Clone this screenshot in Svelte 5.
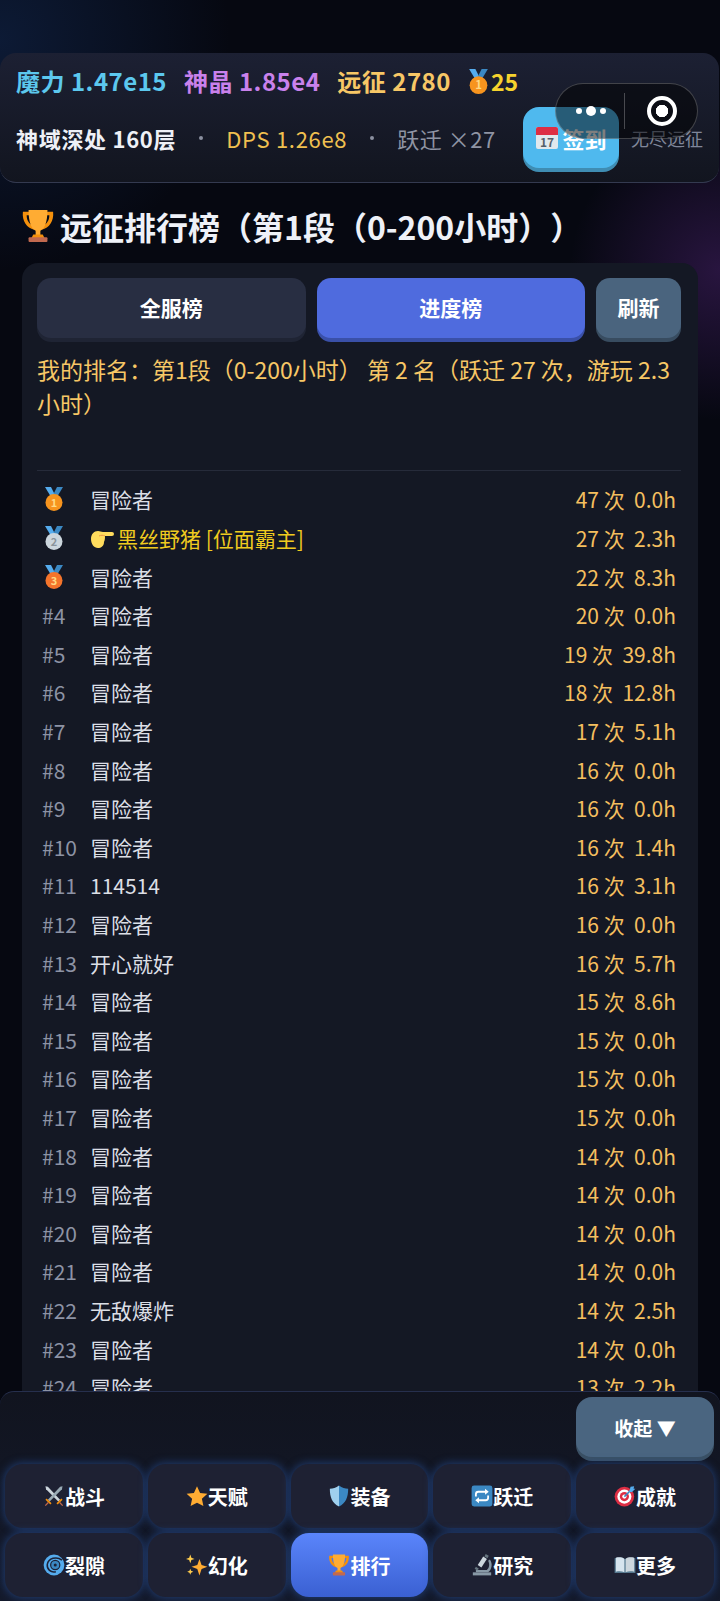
<script lang="ts">
	const rows = [
		['冒险者', '47 次', '0.0h'], ['黑丝野猪 [位面霸主]', '27 次', '2.3h'], ['冒险者', '22 次', '8.3h'],
		['冒险者', '20 次', '0.0h'], ['冒险者', '19 次', '39.8h'], ['冒险者', '18 次', '12.8h'],
		['冒险者', '17 次', '5.1h'], ['冒险者', '16 次', '0.0h'], ['冒险者', '16 次', '0.0h'],
		['冒险者', '16 次', '1.4h'], ['114514', '16 次', '3.1h'], ['冒险者', '16 次', '0.0h'],
		['开心就好', '16 次', '5.7h'], ['冒险者', '15 次', '8.6h'], ['冒险者', '15 次', '0.0h'],
		['冒险者', '15 次', '0.0h'], ['冒险者', '15 次', '0.0h'], ['冒险者', '14 次', '0.0h'],
		['冒险者', '14 次', '0.0h'], ['冒险者', '14 次', '0.0h'], ['冒险者', '14 次', '0.0h'],
		['无敌爆炸', '14 次', '2.5h'], ['冒险者', '14 次', '0.0h'], ['冒险者', '13 次', '2.2h']
	];

	const navItems = [
		{ id: 'swords', label: '战斗' }, { id: 'star', label: '天赋' }, { id: 'shield', label: '装备' },
		{ id: 'repeat', label: '跃迁' }, { id: 'target', label: '成就' }, { id: 'cyclone', label: '裂隙' },
		{ id: 'sparkles', label: '幻化' }, { id: 'trophy', label: '排行', active: true },
		{ id: 'microscope', label: '研究' }, { id: 'book', label: '更多' }
	];

	const medalColors = ['#f7941e', '#ccd6dd', '#f4742b'];
</script>

{#snippet medal(n: number, size: number)}
	<svg class="icon" width={size} height={size} viewBox="0 0 24 24">
		<path d="M3 0h6l5 10H9z" fill="#55acee" />
		<path d="M21 0h-6l-5 10h5z" fill="#3b88c3" />
		<circle cx="12" cy="15.500" r="8.500" fill={medalColors[n - 1]} />
		<text x="12" y="19.500" text-anchor="middle" font-size="11" font-weight="700" fill={n === 2 ? '#8a949b' : '#ffd983'}>{n}</text>
	</svg>
{/snippet}

{#snippet icon(id: string, size: number)}
	<svg class="icon" width={size} height={size} viewBox="0 0 36 36">
		{#if id === 'trophy'}
			<path d="M2 3h10v3.500H6c0 6 3 10 9 12l-1 3.500C6 20 1 13 2 3zM34 3H24v3.500h6c0 6-3 10-9 12l1 3.500c8-2 13-9 12-19z" fill="#f4900c" />
			<path d="M8 1h20c0 13-3 20-7.500 22v5h-5v-5C11 21 8 14 8 1z" fill="#ffac33" />
			<path d="M13 27h10l2 4H11z" fill="#f4900c" />
			<rect x="8" y="30" width="20" height="5" rx="1" fill="#c1694f" />
		{:else if id === 'swords'}
			<path d="M4 2l4 1 20 21-3 3L5 7z" fill="#ccd6dd" />
			<path d="M32 2l-4 1L8 24l3 3L31 7z" fill="#99aab5" />
			<path d="M6 22l8 8-2 2-8-8zM30 22l-8 8 2 2 8-8z" fill="#f4900c" />
			<path d="M8 28l-5 5 1.500 1.500 5-5zM28 28l5 5-1.500 1.500-5-5z" fill="#c1694f" />
		{:else if id === 'star'}
			<path d="M18 2l5 11 12 1.500-9 8 2.500 12L18 29l-10.500 5.500L10 22.500l-9-8L13 13z" fill="#ffac33" />
		{:else if id === 'shield'}
			<path d="M18 1C13 5 8 6 3 6c0 14 4 24 15 29z" fill="#9fd0ee" />
			<path d="M18 1c5 4 10 5 15 5 0 14-4 24-15 29z" fill="#3b88c3" />
		{:else if id === 'repeat'}
			<rect x="1" y="1" width="34" height="34" rx="4" fill="#3b88c3" />
			<path d="M8 19v-4a4 4 0 0 1 4-4h13M28 17v4a4 4 0 0 1-4 4H11" fill="none" stroke="#fff" stroke-width="3" />
			<path d="M23 6l6 5-6 5zM13 20l-6 5 6 5z" fill="#fff" />
		{:else if id === 'target'}
			<circle cx="17" cy="19" r="16" fill="#dd2e44" />
			<circle cx="17" cy="19" r="11.500" fill="#fff" />
			<circle cx="17" cy="19" r="7.500" fill="#dd2e44" />
			<circle cx="17" cy="19" r="3.500" fill="#fff" />
			<path d="M17 19L29 7" stroke="#3b88c3" stroke-width="2.500" />
			<path d="M27 3l6-1-1 4 3 0-6 6-4-1z" fill="#55acee" />
		{:else if id === 'cyclone'}
			<circle cx="18" cy="18" r="17" fill="#55acee" />
			<path d="M31 10C22 3 9 7 7 17c-1 8 6 14 14 12" fill="none" stroke="#1c2238" stroke-width="2.500" />
			<circle cx="20" cy="18" r="7.500" fill="#3b88c3" stroke="#1c2238" stroke-width="2" />
			<circle cx="20" cy="18" r="2.500" fill="#1c2238" />
		{:else if id === 'sparkles'}
			<path d="M22 8l3.500 10L35 21l-9.500 3.500L22 35l-3.500-10.500L9 21l9.500-3z" fill="#ffac33" />
			<path d="M7 1l1.800 5L14 8l-5.200 2L7 15l-1.800-5L0 8l5.200-2z" fill="#ffcc4d" />
			<path d="M7 24l1.300 3.500L12 29l-3.700 1.500L7 34l-1.300-3.500L2 29l3.700-1.500z" fill="#ffcc4d" />
		{:else if id === 'microscope'}
			<path d="M3 30h30v5H3z" fill="#8899a6" />
			<path d="M8 26h18c4-3 5-10 2-15l3-2c5 7 3 17-3 21H8z" fill="#8899a6" />
			<path d="M20 4l6 4-9 14-6-4z" fill="#ccd6dd" />
			<path d="M24 0l5 3-2 4-5-3z" fill="#66757f" />
			<path d="M8 21l5 3-3 3-4-3z" fill="#66757f" />
		{:else if id === 'book'}
			<path d="M1 7c6-2 12-2 17 1 5-3 11-3 17-1v24H1z" fill="#55788f" />
			<path d="M3 6c5-1 10-1 14 2v22c-4-2-9-2-14-1z" fill="#d6e4ee" />
			<path d="M33 6c-5-1-10-1-14 2v22c4-2 9-2 14-1z" fill="#ccd6dd" />
		{/if}
	</svg>
{/snippet}

<div class="screen">
	<header class="stats">
		<div class="resources">
			<span class="magic">魔力 1.47e15</span>
			<span class="crystal">神晶 1.85e4</span>
			<span class="gold">远征 2780</span>
			<span class="medals">{@render medal(1, 25)}25</span>
		</div>
		<div class="status">
			<span class="depth">神域深处 160层</span>
			<span class="dot"></span>
			<span class="dps">DPS 1.26e8</span>
			<span class="dot"></span>
			<span class="warp">跃迁 ×27</span>
			<button class="checkin">
				<svg class="icon" width="24" height="24" viewBox="0 0 24 24">
					<rect x="1" y="1" width="22" height="22" rx="2" fill="#e1e8ed" />
					<path d="M1 9V3a2 2 0 0 1 2-2h18a2 2 0 0 1 2 2v6z" fill="#dd2e44" />
					<text x="12" y="20.500" text-anchor="middle" font-size="12" fill="#55606a">17</text>
				</svg>
				签到
			</button>
			<span class="endless">无尽远征</span>
		</div>
	</header>

	<div class="capsule">
		<div class="more"><i></i><b></b><i></i></div>
		<span class="sep"></span>
		<div class="record"></div>
	</div>

	<main>
		<h1>{@render icon('trophy', 34)}<span>远征排行榜（第1段（0-200小时））</span></h1>
		<section class="board">
			<div class="tabs">
				<button class="tab">全服榜</button>
				<button class="tab on">进度榜</button>
				<button class="refresh">刷新</button>
			</div>
			<p class="mine">我的排名：第1段（0-200小时） 第 2 名（跃迁 27 次，游玩 2.3 小时）</p>
			<div class="list">
				{#each rows as row, i}
					<div class="row">
						<span class="rank">
							{#if i < 3}{@render medal(i + 1, 24)}{:else}#{i + 1}{/if}
						</span>
						<span class="name" class:me={i === 1}>
							{#if i === 1}
								<svg class="icon hand" width="24" height="22" viewBox="0 0 24 22">
									<path d="M1 12c0-5 3-8 7-8 2 0 3 1 5 1h9a2 2 0 0 1 0 4h-7c0 2 0 4-1 6 0 4-3 6-6 6-4 0-7-4-7-9z" fill="#ffdc5d" />
									<path d="M9 9c2-1 4-1 6 0" fill="none" stroke="#ef9645" stroke-width="1" />
								</svg>
							{/if}
							{row[0]}
						</span>
						<span class="score">{row[1]}&nbsp; {row[2]}</span>
					</div>
				{/each}
			</div>
		</section>
	</main>

	<footer class="dock">
		<div class="collapse-row">
			<button class="collapse">收起 ▼</button>
		</div>
		<nav class="nav">
			{#each navItems as item}
				<button class="nav-btn" class:active={item.active}>
					{@render icon(item.id, 22)}{item.label}
				</button>
			{/each}
		</nav>
	</footer>
</div>

<style>
	:global(body) {
		background: #070a14;
	}

	.screen {
		position: relative;
		display: flex;
		flex-direction: column;
		height: 1601px;
		overflow: hidden;
		font-family: 'Noto Sans CJK SC', 'Noto Sans', sans-serif;
		color: #e5e7eb;
		text-spacing-trim: space-all;
		background:
			radial-gradient(circle at 720px 270px, rgba(120, 50, 170, 0.3), transparent 150px),
			radial-gradient(circle at 0 40px, rgba(25, 60, 120, 0.35), transparent 230px),
			#060811;
	}

	button {
		font-family: inherit;
		border: none;
		color: #fff;
		padding: 0;
	}

	.icon {
		flex: none;
	}

	.stats {
		flex: none;
		box-sizing: border-box;
		height: 130px;
		margin: 53px 1px 0 0;
		padding: 12px 16px 0 16px;
		border-radius: 16px;
		border-bottom: 1px solid #343a50;
		background: linear-gradient(180deg, #1c2033, #12151f);
	}

	.resources {
		display: flex;
		align-items: center;
		gap: 17px;
		height: 32px;
		font-size: 24px;
		font-weight: 700;
		letter-spacing: 0.5px;
		line-height: 32px;
		white-space: nowrap;
	}

	.magic {
		color: #5cc8ee;
	}

	.crystal {
		color: #c981ec;
	}

	.gold {
		color: #f7c766;
	}

	.medals {
		display: flex;
		align-items: center;
		margin-left: -2px;
		color: #f6d32d;
		font-size: 23px;
		letter-spacing: 0;
	}

	.status {
		display: flex;
		align-items: center;
		box-sizing: border-box;
		height: 65px;
		margin-top: 10px;
		padding-bottom: 4px;
		font-size: 22px;
		letter-spacing: 0.7px;
		white-space: nowrap;
	}

	.depth {
		font-weight: 700;
		color: #eef0f6;
	}

	.dot {
		width: 4px;
		height: 4px;
		margin: 0 23px;
		border-radius: 50%;
		background: #8b90a0;
	}

	.dps {
		color: #f0c050;
	}

	.warp {
		color: #8f94a3;
		letter-spacing: 0.5px;
	}

	.checkin {
		display: flex;
		align-items: center;
		justify-content: center;
		gap: 3px;
		width: 96px;
		height: 61px;
		margin-left: auto;
		border-radius: 16px;
		background: #4fb9ee;
		box-shadow: 0 4px 0 #3f8db3;
		font-size: 22px;
		font-weight: 700;
	}

	.endless {
		margin-left: 12px;
		font-size: 18px;
		letter-spacing: 0;
		color: #80879a;
	}

	.capsule {
		position: absolute;
		top: 83px;
		left: 555px;
		display: flex;
		align-items: center;
		box-sizing: border-box;
		width: 143px;
		height: 56px;
		border: 1px solid rgba(255, 255, 255, 0.22);
		border-radius: 28px;
		background: rgba(0, 0, 0, 0.5);
	}

	.more {
		display: flex;
		align-items: center;
		justify-content: center;
		gap: 4px;
		width: 66px;
		margin-left: 2px;
	}

	.more i {
		width: 6px;
		height: 6px;
		border-radius: 50%;
		background: #fff;
	}

	.more b {
		width: 10px;
		height: 10px;
		border-radius: 50%;
		background: #fff;
	}

	.sep {
		width: 1px;
		height: 36px;
		background: rgba(255, 255, 255, 0.25);
	}

	.record {
		box-sizing: border-box;
		width: 30px;
		height: 30px;
		margin-left: 22px;
		border: 4px solid #fff;
		border-radius: 50%;
		background: radial-gradient(circle, #fff 0 6px, transparent 6.5px);
	}

	main {
		flex: 1;
		min-height: 0;
		overflow: hidden;
	}

	h1 {
		display: flex;
		align-items: center;
		gap: 5px;
		height: 46px;
		margin: 20px 0 14px 21px;
		font-size: 32px;
		font-weight: 700;
		color: #eef1f8;
		white-space: nowrap;
	}

	.board {
		margin: 0 22px;
		padding: 15px 17px 0 15px;
		border-radius: 16px;
		background: #141824;
	}

	.tabs {
		display: flex;
		gap: 11px;
		height: 60px;
		margin-bottom: 4px;
	}

	.tab {
		flex: 1;
		padding-bottom: 2px;
		border-radius: 14px;
		background: #282e42;
		box-shadow: 0 4px 0 #1f2434;
		font-size: 21px;
		font-weight: 700;
	}

	.tab.on {
		background: #4f6bde;
		box-shadow: 0 4px 0 #3a50a8;
	}

	.refresh {
		flex: none;
		width: 85px;
		padding-bottom: 2px;
		border-radius: 14px;
		background: #4a647e;
		box-shadow: 0 4px 0 #384c60;
		font-size: 21px;
		font-weight: 700;
	}

	.mine {
		height: 110px;
		margin: 14px 0 0;
		font-size: 23px;
		line-height: 34px;
		color: #f7c766;
	}

	.list {
		margin-top: 8px;
		padding-top: 9px;
		border-top: 1px solid #262b3a;
	}

	.row {
		display: flex;
		align-items: center;
		height: 38.62px;
		padding: 0 5px;
		font-size: 21px;
	}

	.rank {
		display: flex;
		align-items: center;
		width: 48px;
		color: #8d93a5;
	}

	.name {
		display: flex;
		align-items: center;
		gap: 3px;
		flex: 1;
		color: #dcdfe6;
	}

	.name.me {
		color: #f0cb1f;
	}

	.score {
		color: #f4bf5f;
		white-space: pre;
	}

	.dock {
		flex: none;
		box-sizing: border-box;
		height: 210px;
		padding: 5px 6px 5px 5px;
		border-top: 1px solid #262f4d;
		border-radius: 14px 14px 0 0;
		background: linear-gradient(180deg, #11141f, #141a2c);
	}

	.collapse-row {
		display: flex;
		justify-content: flex-end;
		height: 67px;
	}

	.collapse {
		width: 138px;
		height: 60px;
		border-radius: 16px;
		background: #4a6580;
		box-shadow: 0 4px 0 #3a5064;
		font-size: 19px;
		font-weight: 700;
	}

	.nav {
		display: grid;
		grid-template-columns: repeat(5, 1fr);
		gap: 5px;
	}

	.nav-btn {
		display: flex;
		align-items: center;
		justify-content: center;
		height: 64px;
		border-radius: 18px;
		background: #1e2133;
		box-shadow: 0 0 8px 1px rgba(40, 80, 150, 0.65);
		font-size: 20px;
		font-weight: 700;
	}

	.nav-btn.active {
		background: linear-gradient(180deg, #5a85fb, #3a60d2);
	}
</style>
